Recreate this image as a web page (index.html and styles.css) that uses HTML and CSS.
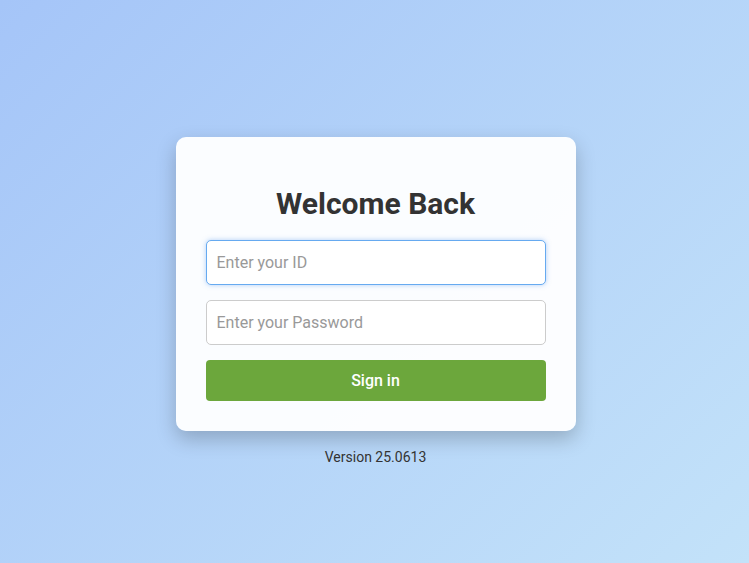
FILE: index.html
```html
<!DOCTYPE html>
<html lang="en">
<head>
  <meta charset="UTF-8">
  <title>Sign in</title>
  <link rel="stylesheet" href="styles.css">
</head>
<body>
  <div class="page">
    <div class="card">
      <h2>Welcome Back</h2>
      <form class="form" onsubmit="return false">
        <input type="text" id="userId" placeholder="Enter your ID" autofocus>
        <input type="password" id="password" placeholder="Enter your Password">
        <button type="submit">Sign in</button>
      </form>
    </div>
    <p class="version">Version 25.0613</p>
  </div>
</body>
</html>
```

FILE: styles.css
```css
html, body { margin: 0; height: 100%; }
body { font-family: Roboto, "Liberation Sans", sans-serif; background: linear-gradient(135deg, #a5c5f8, #c3e2f9); }
.page { min-height: 100vh; box-sizing: border-box; display: flex; flex-direction: column; align-items: center; justify-content: center; padding: 38px 0 0 2px; }
.card { width: 400px; box-sizing: border-box; padding: 50px 30px 30px; background: rgba(255, 255, 255, 0.95); border-radius: 10px; box-shadow: 0 8px 20px rgba(0, 0, 0, 0.22); }
.card h2 { margin: 0 0 20px; text-align: center; font-size: 30px; font-weight: 700; color: #333; line-height: 33px; }
.form { display: flex; flex-direction: column; gap: 15px; }
.form input { height: 45px; box-sizing: border-box; padding: 0 10px; font-family: inherit; font-size: 16px; color: #333; border: 1px solid #ccc; border-radius: 5px; background: #fff; outline: none; }
.form input::placeholder { color: #999; }
.form input:focus { border-color: #66aaf0; box-shadow: 0 0 5px rgba(100, 160, 240, 0.5); }
.form button { height: 41px; border: none; border-radius: 4px; background: #6ca73c; color: #fff; font-family: inherit; font-size: 16px; font-weight: 500; cursor: pointer; }
.version { margin: 18px 0 0; font-size: 14px; color: #333; }
```
